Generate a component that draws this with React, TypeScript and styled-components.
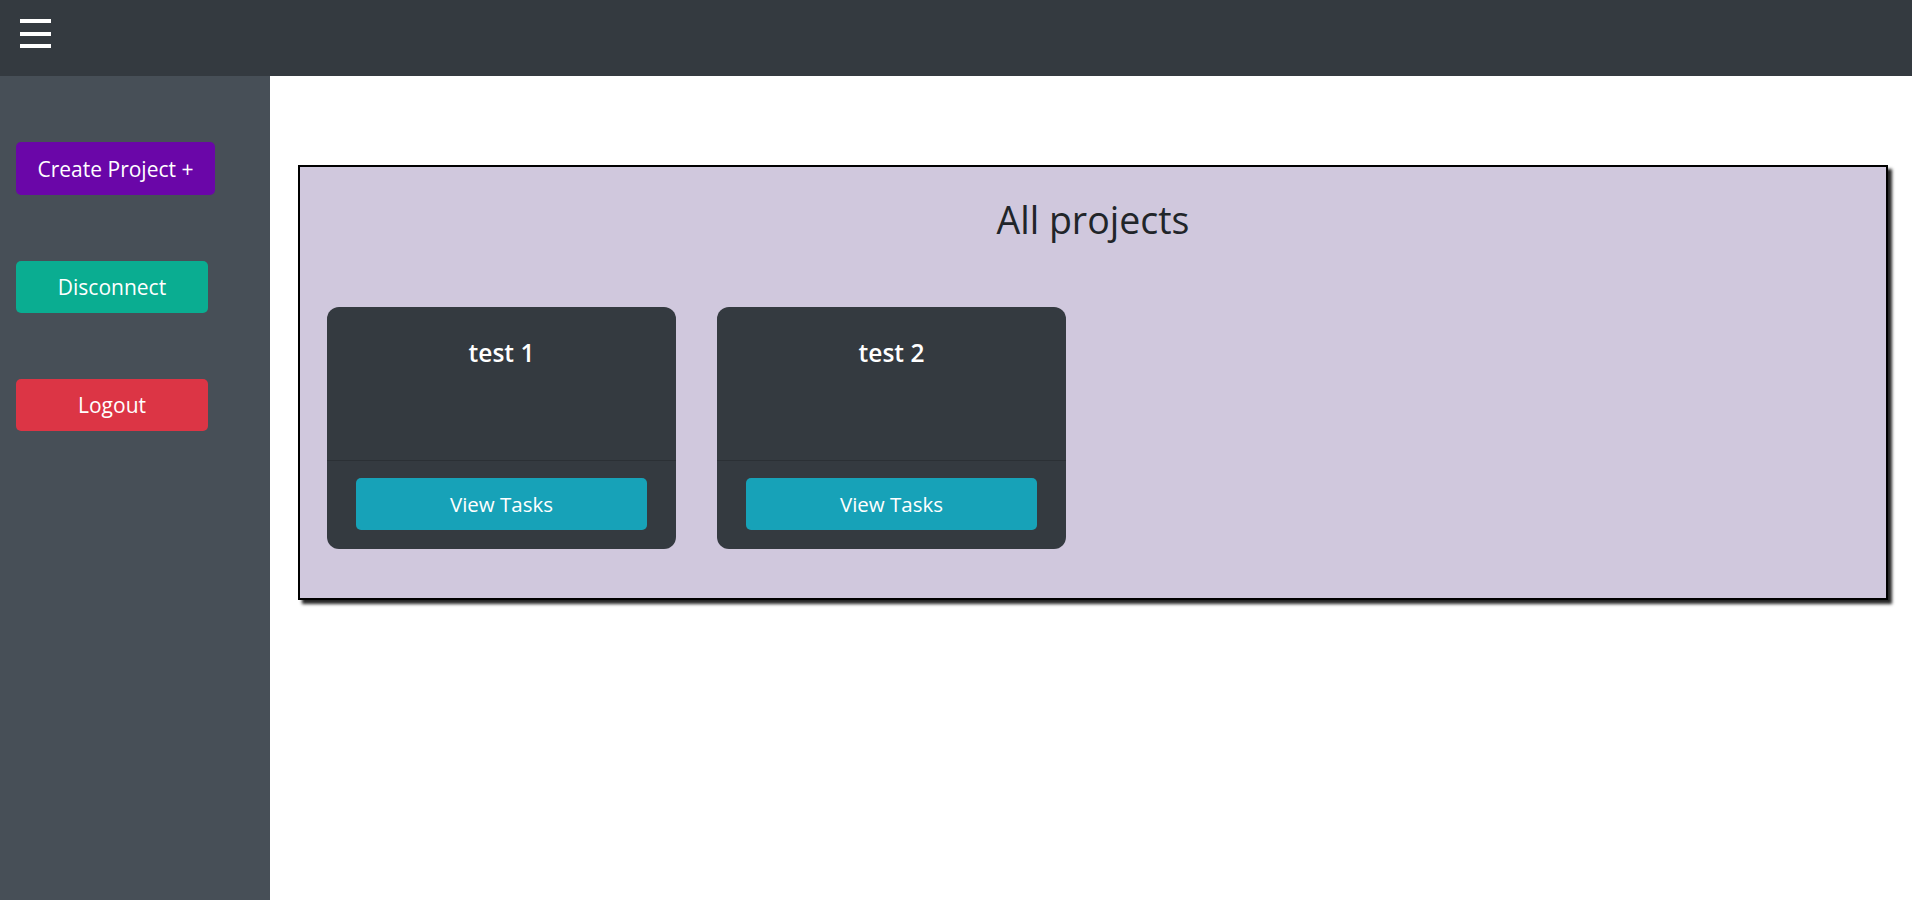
import React from "react";
import styled, { createGlobalStyle } from "styled-components";

const GlobalStyle = createGlobalStyle`
  html, body { margin: 0; padding: 0; }
  body {
    font-family: "Open Sans", "Noto Sans", sans-serif;
    background: #ffffff;
    color: #212529;
  }
  * { box-sizing: border-box; }
`;

const Page = styled.div`
  display: flex;
  flex-direction: column;
  height: 900px;
`;

const TopBar = styled.header`
  height: 76px;
  flex-shrink: 0;
  background: #343a40;
  display: flex;
  align-items: flex-start;
  padding: 19px 0 0 20px;
`;

const MenuButton = styled.button`
  border: none;
  background: transparent;
  padding: 0;
  width: 32px;
  height: 30px;
  display: flex;
  cursor: pointer;
`;

const Body = styled.div`
  flex: 1;
  display: flex;
`;

const Sidebar = styled.aside`
  width: 270px;
  flex-shrink: 0;
  background: #474f57;
  display: flex;
  flex-direction: column;
  align-items: flex-start;
  padding: 66px 0 0 16px;
  gap: 66px;
`;

const SideButton = styled.button<{ $bg: string; $w: number; $h?: number }>`
  width: ${(p) => p.$w}px;
  height: ${(p) => p.$h ?? 52}px;
  border: none;
  border-radius: 5px;
  background: ${(p) => p.$bg};
  color: #ffffff;
  font-family: "Open Sans", "Noto Sans", sans-serif;
  font-size: 21px;
  padding: 0;
  cursor: pointer;
`;

const Main = styled.main`
  flex: 1;
  padding: 89px 24px 0 28px;
`;

const Panel = styled.section`
  border: 2px solid #000000;
  background: #d0c8dd;
  box-shadow: 4px 4px 3px rgba(0, 0, 0, 0.85);
  height: 435px;
  padding: 26px 27px 0 27px;
  display: flex;
  flex-direction: column;
`;

const Title = styled.h2`
  margin: 0;
  text-align: center;
  font-family: "Open Sans", "Noto Sans", sans-serif;
  font-weight: 400;
  font-size: 37.5px;
  line-height: 54px;
  color: #212529;
`;

const CardRow = styled.div`
  display: flex;
  gap: 41px;
  margin-top: 60px;
`;

const Card = styled.div`
  width: 349px;
  height: 242px;
  background: #343a40;
  border-radius: 12px;
  display: flex;
  flex-direction: column;
  overflow: hidden;
`;

const CardBody = styled.div`
  height: 154px;
  padding-top: 27px;
  text-align: center;
  border-bottom: 1px solid #2b3035;
`;

const CardTitle = styled.h5`
  margin: 0;
  color: #ffffff;
  font-family: "Open Sans", "Noto Sans", sans-serif;
  font-weight: 600;
  font-size: 24.5px;
  line-height: 38px;
`;

const CardFooter = styled.div`
  flex: 1;
  display: flex;
  justify-content: center;
  align-items: flex-start;
  padding-top: 17px;
`;

const ViewButton = styled.button`
  width: 291px;
  height: 52px;
  border: none;
  border-radius: 5px;
  background: #17a2b8;
  color: #ffffff;
  font-family: "Open Sans", "Noto Sans", sans-serif;
  font-size: 20.5px;
  padding: 0;
  cursor: pointer;
`;

const projects = ["test 1", "test 2"];

export default function App() {
  return (
    <Page>
      <GlobalStyle />
      <TopBar>
        <MenuButton aria-label="menu">
          <svg width="32" height="30" viewBox="0 0 32 30">
            <rect x="0" y="0" width="31" height="4" fill="#ffffff" />
            <rect x="0" y="13" width="31" height="4" fill="#ffffff" />
            <rect x="0" y="25" width="31" height="4" fill="#ffffff" />
          </svg>
        </MenuButton>
      </TopBar>
      <Body>
        <Sidebar>
          <SideButton $bg="#6a06a8" $w={199} $h={53}>
            Create Project +
          </SideButton>
          <SideButton $bg="#0aad91" $w={192}>
            Disconnect
          </SideButton>
          <SideButton $bg="#dc3545" $w={192}>
            Logout
          </SideButton>
        </Sidebar>
        <Main>
          <Panel>
            <Title>All projects</Title>
            <CardRow>
              {projects.map((p) => (
                <Card key={p}>
                  <CardBody>
                    <CardTitle>{p}</CardTitle>
                  </CardBody>
                  <CardFooter>
                    <ViewButton>View Tasks</ViewButton>
                  </CardFooter>
                </Card>
              ))}
            </CardRow>
          </Panel>
        </Main>
      </Body>
    </Page>
  );
}
